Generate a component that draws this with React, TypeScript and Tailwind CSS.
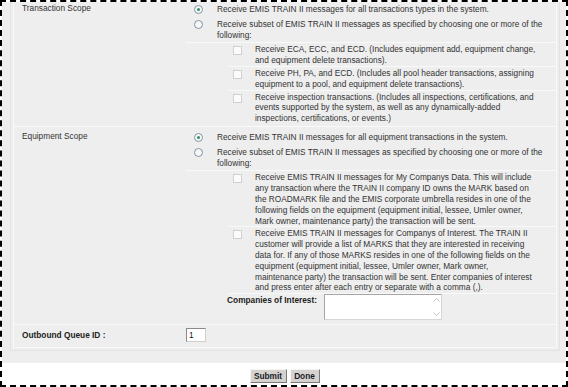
import React from "react";

function Radio({ checked }: { checked?: boolean }) {
  return (
    <span className="mt-[1px] flex h-[9px] w-[9px] shrink-0 items-center justify-center rounded-full border border-[#7d93a8] bg-[#f8f8f8]">
      {checked && <span className="h-[3px] w-[3px] rounded-full bg-[#2c8c66]" />}
    </span>
  );
}

function Check() {
  return <span className="mt-[2px] block h-[9px] w-[9px] shrink-0 border border-[#cfcfcf] bg-[#fbfbfb]" />;
}

function RadioRow({ checked, children }: { checked?: boolean; children: React.ReactNode }) {
  return (
    <div className="flex py-[2px]">
      <div className="flex w-[31px] shrink-0 justify-start pl-[8px]">
        <Radio checked={checked} />
      </div>
      <div className="w-[335px]">{children}</div>
    </div>
  );
}

function CheckRow({ children, last }: { children: React.ReactNode; last?: boolean }) {
  return (
    <div className={"ml-[43px] flex pt-[1px] " + (last ? "" : "border-b border-b-[#f9f9f9]")}>
      <div className="flex w-[26px] shrink-0 pl-[4px]">
        <Check />
      </div>
      <div className="w-[282px]">{children}</div>
    </div>
  );
}

export default function App() {
  return (
    <div className="h-[387px] w-[568px] overflow-hidden border-2 border-dashed border-black bg-white font-['Liberation_Sans',Arial,sans-serif] text-[8.3px] leading-[10.8px] text-[#333]">
      <div className="h-[361px] bg-[#eeeeee] pl-[8px] pr-[6px]">
        <div className="h-[349px] border-x border-b border-[#e3e3e3] px-[2px] pb-[2px]">
          <div className="h-full border-x border-b border-[#f8f8f8]">
            {/* Transaction Scope */}
            <div className="flex border-b border-b-[#f9f9f9] pb-[2px]">
              <div className="w-[172px] shrink-0 pl-[8px] pt-[1px]">Transaction Scope</div>
              <div className="flex-1">
                <RadioRow checked>Receive EMIS TRAIN II messages for all transactions types in the system.</RadioRow>
                <div className="border-b border-b-[#f9f9f9]">
                  <RadioRow>
                    Receive subset of EMIS TRAIN II messages as specified by choosing one or more of the following:
                  </RadioRow>
                </div>
                <CheckRow>
                  Receive ECA, ECC, and ECD. (Includes equipment add, equipment change, and equipment delete transactions).
                </CheckRow>
                <CheckRow>
                  Receive PH, PA, and ECD. (Includes all pool header transactions, assigning equipment to a pool, and
                  equipment delete transactions).
                </CheckRow>
                <CheckRow last>
                  Receive inspection transactions. (Includes all inspections, certifications, and events supported by the
                  system, as well as any dynamically-added inspections, certifications, or events.)
                </CheckRow>
              </div>
            </div>

            {/* Equipment Scope */}
            <div className="flex border-b border-b-[#f9f9f9] pb-[2px] pt-[3px]">
              <div className="w-[172px] shrink-0 pl-[8px] pt-[1px]">Equipment Scope</div>
              <div className="flex-1">
                <RadioRow checked>Receive EMIS TRAIN II messages for all equipment transactions in the system.</RadioRow>
                <div className="border-b border-b-[#f9f9f9]">
                  <RadioRow>
                    Receive subset of EMIS TRAIN II messages as specified by choosing one or more of the following:
                  </RadioRow>
                </div>
                <CheckRow>
                  Receive EMIS TRAIN II messages for My Companys Data. This will include any transaction where the TRAIN
                  II company ID owns the MARK based on the ROADMARK file and the EMIS corporate umbrella resides in one of
                  the following fields on the equipment (equipment initial, lessee, Umler owner, Mark owner, maintenance
                  party) the transaction will be sent.
                </CheckRow>
                <CheckRow>
                  Receive EMIS TRAIN II messages for Companys of Interest. The TRAIN II customer will provide a list of
                  MARKS that they are interested in receiving data for. If any of those MARKS resides in one of the
                  following fields on the equipment (equipment initial, lessee, Umler owner, Mark owner, maintenance party)
                  the transaction will be sent. Enter companies of interest and press enter after each entry or separate
                  with a comma (,).
                </CheckRow>
                <div className="ml-[36px] flex pb-[2px]">
                  <div className="w-[95px] shrink-0 whitespace-nowrap pt-[1px] text-right font-bold text-[#222]">
                    Companies of Interest:
                  </div>
                  <div className="ml-[7px] flex h-[26px] w-[118px] border border-[#a5a5a5] border-b-[#d6d6d6] border-r-[#d6d6d6] bg-white">
                    <div className="flex-1" />
                    <div className="flex w-[10px] flex-col items-center justify-between py-[3px]">
                      <svg width="7" height="4" viewBox="0 0 7 4">
                        <path d="M0.5 3.5 L3.5 0.5 L6.5 3.5" fill="none" stroke="#c4c4c4" />
                      </svg>
                      <svg width="7" height="4" viewBox="0 0 7 4">
                        <path d="M0.5 0.5 L3.5 3.5 L6.5 0.5" fill="none" stroke="#c4c4c4" />
                      </svg>
                    </div>
                  </div>
                </div>
              </div>
            </div>

            {/* Outbound Queue ID */}
            <div className="flex items-center pb-[7px] pt-[3px]">
              <div className="w-[172px] shrink-0 pl-[8px] font-bold text-[#222]">Outbound Queue ID :</div>
              <div className="flex h-[14px] w-[20px] items-center border border-[#8a8a8a] border-b-[#cfcfcf] border-r-[#cfcfcf] bg-white pl-[2px] text-[#111]">
                1
              </div>
            </div>
          </div>
        </div>
      </div>
      <div className="flex justify-center gap-[3px] pl-[1px] pt-[6px]">
        <button className="h-[14px] w-[37px] border border-[#f4f4f4] border-b-[#7a7a7a] border-r-[#7a7a7a] bg-[#d6d3ce] p-0 text-[8.3px] font-bold leading-[12px] text-[#1a1a2a]">
          Submit
        </button>
        <button className="h-[14px] w-[30px] border border-[#f4f4f4] border-b-[#7a7a7a] border-r-[#7a7a7a] bg-[#d6d3ce] p-0 text-[8.3px] font-bold leading-[12px] text-[#1a1a2a]">
          Done
        </button>
      </div>
    </div>
  );
}
